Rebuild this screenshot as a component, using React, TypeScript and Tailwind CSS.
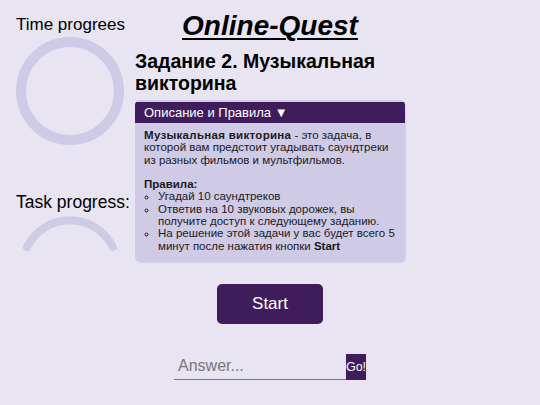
import React, { useState } from 'react';

const font = { fontFamily: '"Liberation Sans", Arial, sans-serif' };

const rules = [
  'Угадай 10 саундтреков',
  'Ответив на 10 звуковых дорожек, вы получите доступ к следующему заданию.',
];

const TimeRing: React.FC = () => (
  <svg width="108" height="108" viewBox="0 0 108 108" className="block">
    <circle cx="54" cy="54" r="49" fill="none" stroke="#cfcbe6" strokeWidth="10" />
  </svg>
);

const TaskGauge: React.FC = () => (
  <svg width="108" height="44" viewBox="0 0 108 44" className="block">
    <path
      d="M11 35 A48 48 0 0 1 97 35"
      fill="none"
      stroke="#cfcbe6"
      strokeWidth="8"
      strokeLinecap="round"
    />
  </svg>
);

export default function App() {
  const [answer, setAnswer] = useState('');
  const [open, setOpen] = useState(true);

  return (
    <div className="w-[540px] h-[405px] bg-[#e8e4f1] text-black overflow-hidden" style={font}>
      <div className="flex">
        {/* progress column */}
        <div className="w-[135px] pl-4 pt-[15px] flex flex-col">
          <div className="text-[17px] leading-[20px]">Time progrees</div>
          <div className="mt-[2px]">
            <TimeRing />
          </div>
          <div className="mt-[47px] text-[17.5px] leading-[20px]">Task progress:</div>
          <TaskGauge />
        </div>

        {/* task column */}
        <div className="w-[270px] flex flex-col">
          <h1 className="mt-[10px] text-center text-[28px] leading-[32px] font-bold italic underline decoration-2 underline-offset-[3px]">
            Online-Quest
          </h1>
          <h2 className="mt-[8px] text-[19.5px] leading-[22px] font-bold">
            Задание 2. Музыкальная викторина
          </h2>
          <div className="mt-[6px] rounded-[5px] bg-[#cfcae6] overflow-hidden shadow-[1px_1px_1px_rgba(0,0,0,0.08)]">
            <button
              type="button"
              onClick={() => setOpen(!open)}
              className="w-full h-[21px] bg-[#3f1d5c] text-white text-left pl-[9px] text-[13px] leading-[21px]"
            >
              Описание и Правила ▼
            </button>
            {open && (
              <div className="pl-[9px] pr-[6px] pt-[5px] pb-[10px] text-[11.5px] leading-[12.3px] text-[#1a1a1a]">
                <p>
                  <b className="tracking-[0.3px]">Музыкальная викторина</b> - это задача, в которой вам предстоит
                  угадывать саундтреки из разных фильмов и мультфильмов.
                </p>
                <p className="mt-[12.3px] font-bold">Правила:</p>
                <ul className="list-[circle] pl-[14px]">
                  {rules.map((r) => (
                    <li key={r}>{r}</li>
                  ))}
                  <li>
                    На решение этой задачи у вас будет всего 5 минут после нажатия кнопки <b>Start</b>
                  </li>
                </ul>
              </div>
            )}
          </div>
        </div>
      </div>

      <div className="flex justify-center mt-[22px]">
        <button
          type="button"
          className="w-[106px] h-[40px] rounded-[5px] bg-[#3f1d5c] text-white text-[17px]"
        >
          Start
        </button>
      </div>

      <div className="flex justify-center mt-[30px]">
        <div className="flex items-end">
          <input
            value={answer}
            onChange={(e) => setAnswer(e.target.value)}
            placeholder="Answer..."
            className="w-[172px] h-[26px] bg-transparent border-b border-[#777] pl-1 text-[16px] outline-none placeholder:text-[#777]"
          />
          <button
            type="button"
            className="w-[20px] h-[26px] bg-[#3f1d5c] text-white text-[12.5px] leading-[26px] px-0 overflow-visible whitespace-nowrap flex items-center justify-center"
          >
            Go!
          </button>
        </div>
      </div>
    </div>
  );
}
